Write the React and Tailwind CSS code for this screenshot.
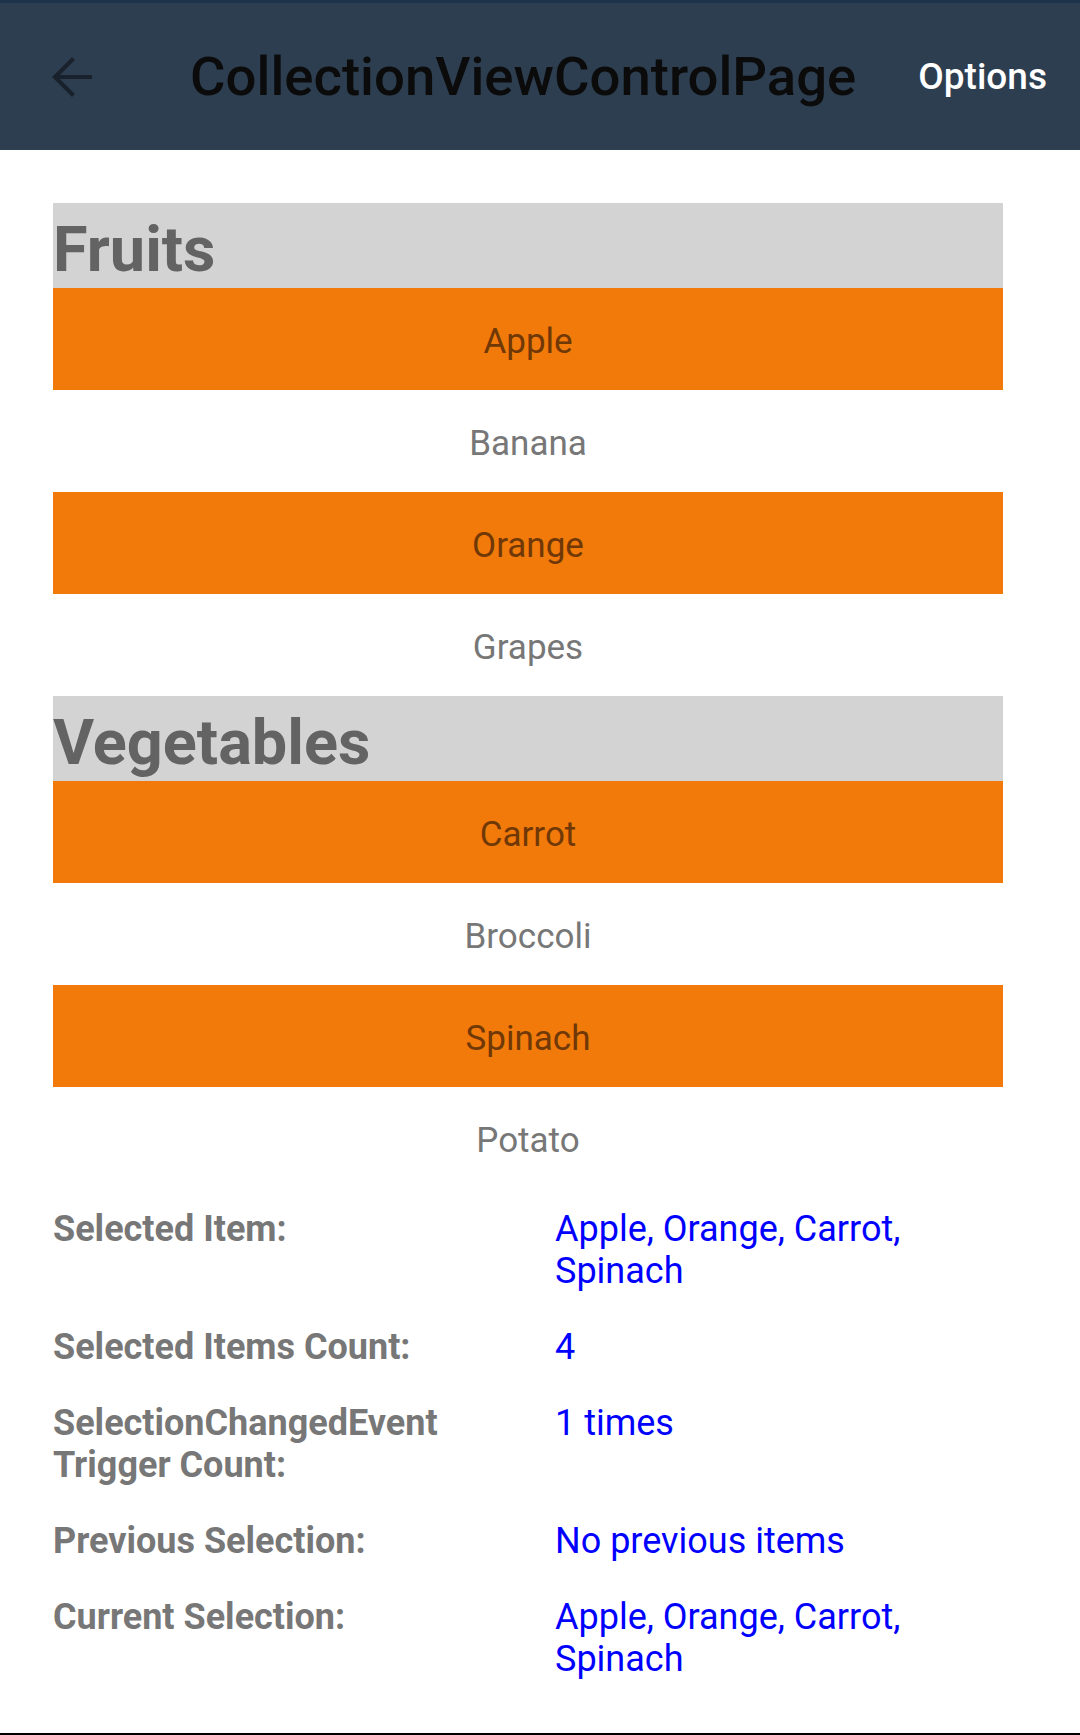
import React from 'react';

const groups = [
  {
    name: 'Fruits',
    items: [
      { label: 'Apple', selected: true },
      { label: 'Banana', selected: false },
      { label: 'Orange', selected: true },
      { label: 'Grapes', selected: false },
    ],
  },
  {
    name: 'Vegetables',
    items: [
      { label: 'Carrot', selected: true },
      { label: 'Broccoli', selected: false },
      { label: 'Spinach', selected: true },
      { label: 'Potato', selected: false },
    ],
  },
];

const info = [
  { label: 'Selected Item:', value: 'Apple, Orange, Carrot, Spinach' },
  { label: 'Selected Items Count:', value: '4' },
  { label: 'SelectionChangedEvent Trigger Count:', value: '1 times' },
  { label: 'Previous Selection:', value: 'No previous items' },
  { label: 'Current Selection:', value: 'Apple, Orange, Carrot, Spinach' },
];

function BackArrow() {
  return (
    <svg width="41" height="42" viewBox="0 0 41 42" fill="none">
      <path d="M41 21H4M22.5 2.5L4 21L22.5 39.5" stroke="#19222c" strokeWidth="4.2" />
    </svg>
  );
}

export default function App() {
  return (
    <div className="flex h-[1735px] flex-col bg-white" style={{ fontFamily: 'Roboto, "Noto Sans", sans-serif' }}>
      {/* Toolbar */}
      <div className="h-[150px] bg-[#2d3e50]">
        <div className="h-[3px] bg-[#1d3349]" />
        <div className="flex h-[147px] items-center">
          <div className="ml-[51px]">
            <BackArrow />
          </div>
          <h1 className="ml-[98px] text-[54.5px] font-medium leading-none text-[#0b0b0b]">CollectionViewControlPage</h1>
          <button className="ml-auto mr-[33px] text-[37px] font-medium leading-none text-white">Options</button>
        </div>
      </div>

      {/* Grouped list */}
      <div className="ml-[53px] mr-[77px] mt-[53px]">
        {groups.map((group) => (
          <div key={group.name}>
            <div className="h-[85px] bg-[#d3d3d3] pt-[9px]">
              <span className="text-[63px] font-bold leading-[75px] text-[#636363]">{group.name}</span>
            </div>
            {group.items.map((item) => (
              <div
                key={item.label}
                className={`flex h-[102px] items-center justify-center pt-[6px] text-[35px] ${
                  item.selected ? 'bg-[#f27a0b] text-[#703806]' : 'bg-white text-[#777777]'
                }`}
              >
                {item.label}
              </div>
            ))}
          </div>
        ))}
      </div>

      {/* Selection info */}
      <div className="ml-[53px] mr-[77px] mt-[19px] flex flex-col gap-[34px] text-[36px] leading-[42px]">
        {info.map((row) => (
          <div key={row.label} className="flex">
            <div className="w-[502px] shrink-0 pr-[24px] font-bold text-[#777777]">{row.label}</div>
            <div className="flex-1 text-[#0000ff]">{row.value}</div>
          </div>
        ))}
      </div>

      <div className="mt-auto h-[2px] bg-black" />
    </div>
  );
}
